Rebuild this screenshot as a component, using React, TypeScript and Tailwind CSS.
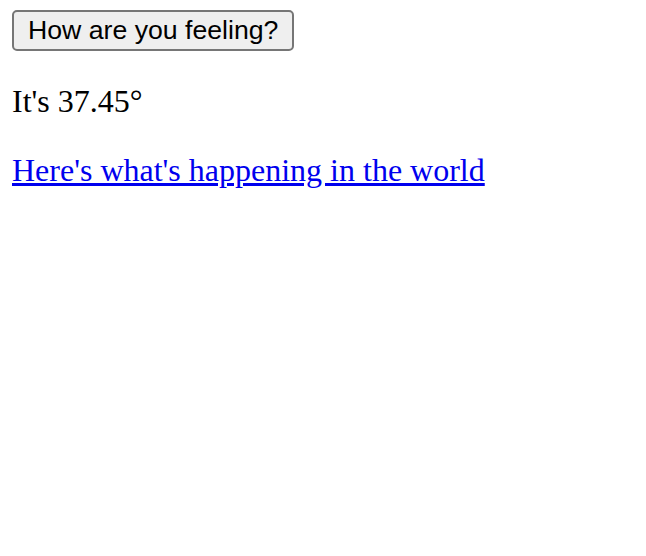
export default function App() {
    return (
        <div className="min-h-screen bg-white px-[12px] pt-[10px]" style={{ fontFamily: '"Liberation Serif", serif' }}>
            <button
                className="h-[41px] rounded-[5px] border-2 border-[#767676] bg-[#efefef] px-[14px] text-[26.67px] leading-none text-black"
                style={{ fontFamily: '"Liberation Sans", Arial, sans-serif' }}
            >
                How are you feeling?
            </button>
            <p className="mt-[32px] text-[32px] leading-[36.8px] text-black">It's 37.45°</p>
            <p className="mt-[32px] text-[32px] leading-[36.8px]">
                <a href="#" className="text-[#0000ee] underline">Here's what's happening in the world</a>
            </p>
        </div>
    );
}
